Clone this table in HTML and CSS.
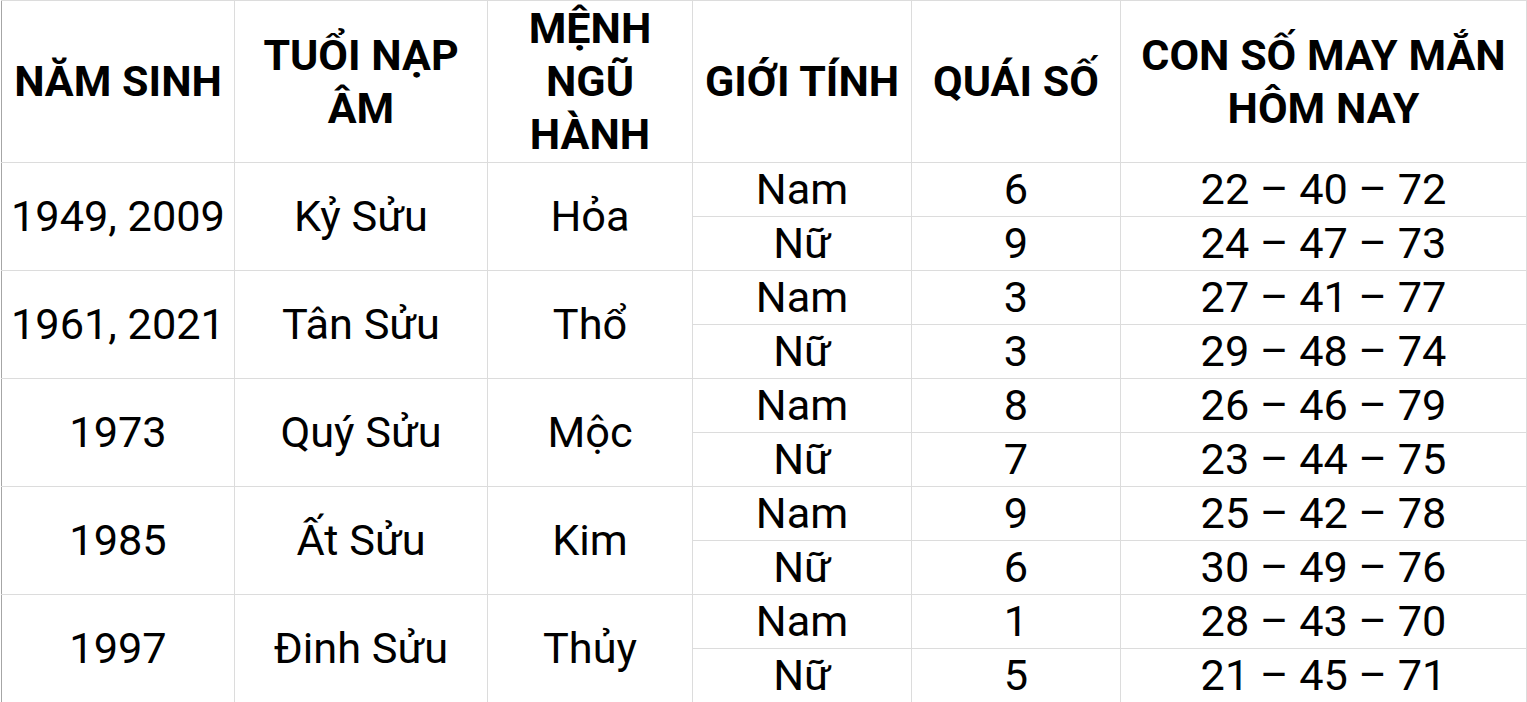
FILE: index.html
```html
<!DOCTYPE html>
<html lang="vi">
<head>
<meta charset="utf-8">
<title>Con số may mắn</title>
<link rel="stylesheet" href="styles.css">
</head>
<body>
<table class="luck">
  <colgroup>
    <col class="c1"><col class="c2"><col class="c3"><col class="c4"><col class="c5"><col class="c6">
  </colgroup>
  <thead>
    <tr class="head">
      <th>NĂM SINH</th>
      <th>TUỔI NẠP<br>ÂM</th>
      <th>MỆNH<br>NGŨ<br>HÀNH</th>
      <th>GIỚI TÍNH</th>
      <th>QUÁI SỐ</th>
      <th>CON SỐ MAY MẮN<br>HÔM NAY</th>
    </tr>
  </thead>
  <tbody>
    <tr><td rowspan="2">1949, 2009</td><td rowspan="2">Kỷ Sửu</td><td rowspan="2">Hỏa</td><td>Nam</td><td>6</td><td>22 – 40 – 72</td></tr>
    <tr><td>Nữ</td><td>9</td><td>24 – 47 – 73</td></tr>
    <tr><td rowspan="2">1961, 2021</td><td rowspan="2">Tân Sửu</td><td rowspan="2">Thổ</td><td>Nam</td><td>3</td><td>27 – 41 – 77</td></tr>
    <tr><td>Nữ</td><td>3</td><td>29 – 48 – 74</td></tr>
    <tr><td rowspan="2">1973</td><td rowspan="2">Quý Sửu</td><td rowspan="2">Mộc</td><td>Nam</td><td>8</td><td>26 – 46 – 79</td></tr>
    <tr><td>Nữ</td><td>7</td><td>23 – 44 – 75</td></tr>
    <tr><td rowspan="2">1985</td><td rowspan="2">Ất Sửu</td><td rowspan="2">Kim</td><td>Nam</td><td>9</td><td>25 – 42 – 78</td></tr>
    <tr><td>Nữ</td><td>6</td><td>30 – 49 – 76</td></tr>
    <tr><td rowspan="2">1997</td><td rowspan="2">Đinh Sửu</td><td rowspan="2">Thủy</td><td>Nam</td><td>1</td><td>28 – 43 – 70</td></tr>
    <tr><td>Nữ</td><td>5</td><td>21 – 45 – 71</td></tr>
  </tbody>
</table>
</body>
</html>
```
FILE: styles.css
```css
html, body {
  margin: 0;
  padding: 0;
  background: #fff;
}
body {
  font-family: Roboto, "Noto Sans", sans-serif;
  color: #000;
  overflow: hidden;
  padding-left: 1px;
}
.luck {
  border-collapse: collapse;
  table-layout: fixed;
  width: 1525px;
}
.c1 { width: 233px; }
.c2 { width: 253px; }
.c3 { width: 205px; }
.c4 { width: 219px; }
.c5 { width: 209px; }
.c6 { width: 406px; }
.luck th,
.luck td {
  border: 1px solid #dcdcdc;
  padding: 0 2px;
  text-align: center;
  vertical-align: middle;
  white-space: nowrap;
}
.luck tr > :first-child {
  border-left-color: #a6a6a6;
}
.luck th {
  font-size: 43px;
  font-weight: 700;
  line-height: 53px;
  height: 161px;
}
.luck td {
  font-size: 43.3px;
  font-weight: 400;
  line-height: 50px;
  height: 53px;
}
.luck tbody tr:nth-child(even) > :first-child {
  border-left-color: #dcdcdc;
}
```
